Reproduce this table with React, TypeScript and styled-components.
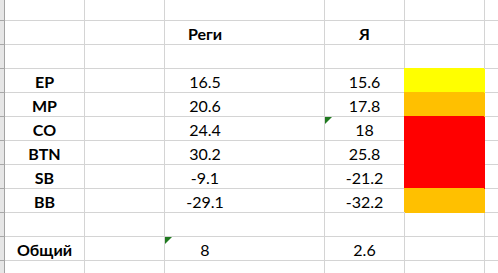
import React from "react";
import styled, { createGlobalStyle } from "styled-components";

const Global = createGlobalStyle`
  html, body { margin: 0; padding: 0; background: #ffffff; overflow: hidden; }
  body { font-family: Lato, "Liberation Sans", sans-serif; font-size: 16px; color: #000; }
`;

const GRID = "#d4d4d4";

const Sheet = styled.div`
  width: 498px;
  height: 273px;
  display: flex;
  flex-direction: column;
  overflow: hidden;
`;

const Row = styled.div<{ $h: number }>`
  display: flex;
  flex: 0 0 ${(p) => p.$h}px;
  height: ${(p) => p.$h}px;
`;

const RowHead = styled.div<{ $last?: boolean }>`
  flex: 0 0 5px;
  box-sizing: border-box;
  background: #e6e6e6;
  border-right: 1px solid #a3a3a3;
  border-bottom: ${(p) => (p.$last ? "none" : "1px solid #a8a8a8")};
`;

const Cell = styled.div<{
  $w?: number;
  $bold?: boolean;
  $noRight?: boolean;
  $fill?: string;
  $last?: boolean;
}>`
  position: relative;
  box-sizing: border-box;
  flex: ${(p) => (p.$w ? `0 0 ${p.$w}px` : "1 1 auto")};
  display: flex;
  align-items: flex-end;
  justify-content: center;
  line-height: 20px;
  font-weight: ${(p) => (p.$bold ? 700 : 400)};
  border-right: ${(p) => (p.$noRight ? "none" : `1px solid ${p.$fill ?? GRID}`)};
  border-bottom: ${(p) => (p.$last ? "none" : `1px solid ${p.$fill ?? GRID}`)};
  white-space: nowrap;

  &::before {
    content: "";
    display: ${(p) => (p.$fill ? "block" : "none")};
    position: absolute;
    top: -1px;
    left: -1px;
    right: 0;
    bottom: 0;
    background: ${(p) => p.$fill ?? "transparent"};
  }
`;

const Marker = styled.span`
  position: absolute;
  top: 0;
  left: 0;
  width: 0;
  height: 0;
  border-top: 7px solid #1f7a1f;
  border-right: 7px solid transparent;
`;

type RowData = {
  label?: string;
  a?: string;
  b?: string;
  fill?: string;
  bold?: boolean;
  markA?: boolean;
  markB?: boolean;
};

const YELLOW = "#ffff00";
const ORANGE = "#ffc000";
const RED = "#ff0000";

const rows: RowData[] = [
  {},
  { a: "Реги", b: "Я", bold: true },
  {},
  { label: "EP", a: "16.5", b: "15.6", fill: YELLOW },
  { label: "MP", a: "20.6", b: "17.8", fill: ORANGE },
  { label: "CO", a: "24.4", b: "18", fill: RED, markB: true },
  { label: "BTN", a: "30.2", b: "25.8", fill: RED },
  { label: "SB", a: "-9.1", b: "-21.2", fill: RED },
  { label: "BB", a: "-29.1", b: "-32.2", fill: ORANGE },
  {},
  { label: "Общий", a: "8", b: "2.6", markA: true },
  {},
];

export default function App() {
  return (
    <>
      <Global />
      <Sheet>
        {rows.map((r, i) => {
          const last = i === rows.length - 1;
          const h = i === 0 ? 21 : last ? 12 : 24;
          return (
            <Row key={i} $h={h}>
              <RowHead $last={last} />
              <Cell $w={80} $bold $last={last}>{r.label}</Cell>
              <Cell $w={80} $last={last} />
              <Cell $w={80} $noRight $bold={r.bold} $last={last}>
                {r.markA && <Marker />}
                {r.a}
              </Cell>
              <Cell $w={80} $last={last} />
              <Cell $w={80} $bold={r.bold} $last={last}>
                {r.markB && <Marker />}
                {r.b}
              </Cell>
              <Cell $w={80} $fill={r.fill} $last={last} />
              <Cell $last={last} $noRight />
            </Row>
          );
        })}
      </Sheet>
    </>
  );
}
